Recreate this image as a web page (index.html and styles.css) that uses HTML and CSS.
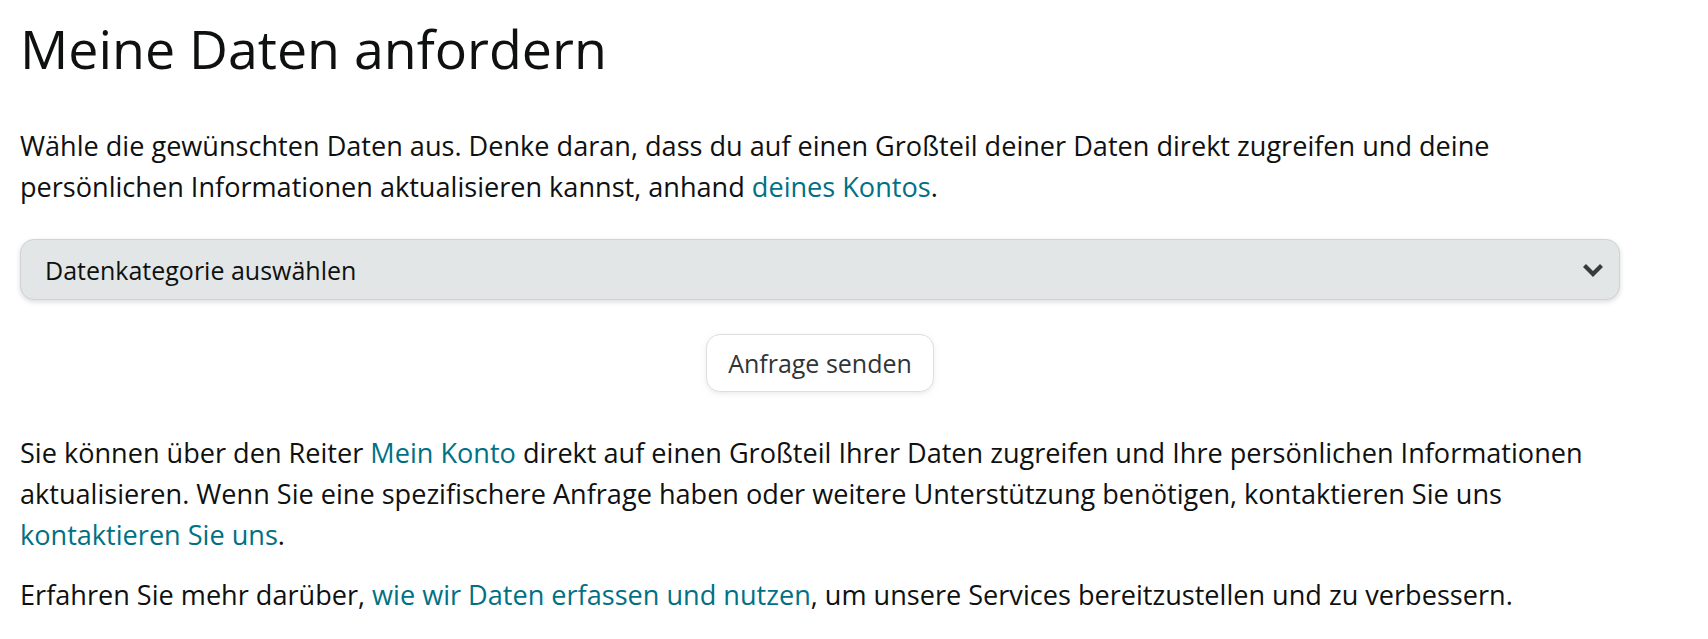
FILE: index.html
```html
<!DOCTYPE html>
<html lang="de">
<head>
  <meta charset="UTF-8">
  <meta name="viewport" content="width=device-width, initial-scale=1.0">
  <title>Meine Daten anfordern</title>
  <link rel="stylesheet" href="styles.css">
</head>
<body>
  <div class="page">
    <h1 class="title">Meine Daten anfordern</h1>

    <p class="intro">Wähle die gewünschten Daten aus. Denke daran, dass du auf einen Großteil deiner Daten direkt zugreifen und deine persönlichen Informationen aktualisieren kannst, anhand <a href="#">deines Kontos</a>.</p>

    <div class="dropdown">
      <span class="dropdown-label">Datenkategorie auswählen</span>
      <svg class="dropdown-icon" width="22" height="14" viewBox="0 0 22 14">
        <polyline points="2.5,2.5 11,11 19.5,2.5" fill="none" stroke="#383b3c" stroke-width="4.2" stroke-linejoin="miter"/>
      </svg>
    </div>

    <div class="actions">
      <button class="btn" type="button">Anfrage senden</button>
    </div>

    <p class="info">Sie können über den Reiter <a href="#">Mein Konto</a> direkt auf einen Großteil Ihrer Daten zugreifen und Ihre persönlichen Informationen aktualisieren. Wenn Sie eine spezifischere Anfrage haben oder weitere Unterstützung benötigen, kontaktieren Sie uns <a href="#">kontaktieren Sie uns</a>.</p>

    <p class="info info-last">Erfahren Sie mehr darüber, <a href="#">wie wir Daten erfassen und nutzen</a>, um unsere Services bereitzustellen und zu verbessern.</p>
  </div>
</body>
</html>
```

FILE: styles.css
```css
* {
  margin: 0;
  padding: 0;
  box-sizing: border-box;
}

body {
  font-family: "Open Sans", "Noto Sans", sans-serif;
  color: #0f1111;
  background: #fff;
}

a {
  color: #007185;
  text-decoration: none;
}

.page {
  width: 1620px;
  padding: 17px 0 0 20px;
}

.title {
  font-size: 53.7px;
  line-height: 64px;
  font-weight: 400;
}

.intro,
.info {
  font-size: 27.1px;
  line-height: 41px;
}

.intro {
  margin-top: 44px;
}

/* Auswahlfeld */
.dropdown {
  margin-top: 32px;
  height: 61px;
  display: flex;
  align-items: center;
  justify-content: space-between;
  padding: 0 15px 0 24px;
  background-color: #e3e6e6;
  border: 1px solid #cfd3d3;
  border-radius: 14px;
  box-shadow: 0 2px 5px rgba(15, 17, 17, .15);
}

.dropdown-label {
  font-size: 25px;
}

.dropdown-icon {
  display: block;
}

.actions {
  margin-top: 34px;
  display: flex;
  justify-content: center;
}

.btn {
  height: 58px;
  padding: 0 21px;
  font-family: inherit;
  font-size: 25px;
  color: #2f3537;
  background-color: #fff;
  border: 1px solid #dcdfdf;
  border-radius: 14px;
  box-shadow: 0 2px 5px rgba(213, 217, 217, .5);
}

.info {
  margin-top: 40px;
}

.info-last {
  margin-top: 19px;
}
```
